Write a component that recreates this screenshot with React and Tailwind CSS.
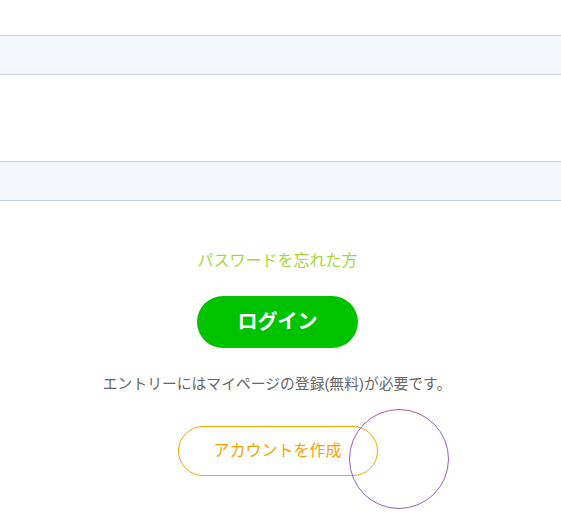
export default function App() {
  return (
    <div className="relative w-[561px] h-[514px] bg-white overflow-hidden font-['Liberation_Sans','Noto_Sans_CJK_JP',sans-serif]">
      <div className="h-[35px]" />
      <div className="h-[40px] bg-[#f3f6fa] border-y border-[#ccd4df]" />
      <div className="h-[86px]" />
      <div className="h-[40px] bg-[#f3f6fa] border-y border-[#ccd4df]" />

      <div className="w-[555px] flex flex-col items-center">
        <a className="mt-[49px] text-[16px] leading-[22px] text-[#a3d83b]">
          パスワードを忘れた方
        </a>
        <button className="mt-[24px] w-[161px] h-[52px] rounded-full bg-[#00c300] text-white text-[20px] font-bold">
          ログイン
        </button>
        <p className="mt-[26px] text-[14.8px] leading-[20px] text-[#666666] -ml-[1px]">
          エントリーにはマイページの登録(無料)が必要です。
        </p>
        <button className="mt-[32px] w-[200px] h-[50px] rounded-full border border-[#f7a800] text-[#f5a300] text-[16px]">
          アカウントを作成
        </button>
      </div>

      <div className="absolute left-[349px] top-[409px] w-[100px] h-[100px] rounded-full border border-[#9b5cc4]" />
    </div>
  );
}
